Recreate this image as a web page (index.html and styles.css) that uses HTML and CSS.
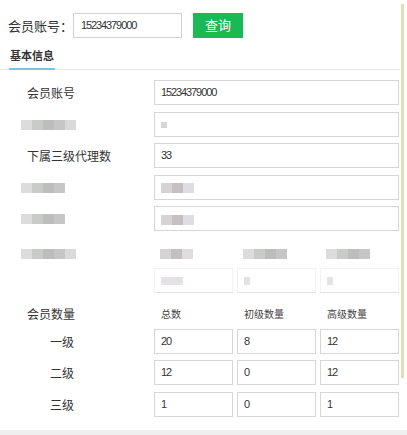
FILE: index.html
```html
<!DOCTYPE html>
<html lang="zh">
<head>
<meta charset="utf-8">
<link rel="stylesheet" href="styles.css">
</head>
<body>
<div class="page">
  <div class="search">
    <span class="search-label">会员账号：</span>
    <div class="search-input num">15234379000</div>
    <div class="btn">查询</div>
  </div>
  <div class="tabs">
    <div class="tab active">基本信息</div>
  </div>
  <div class="form">
    <div class="row">
      <div class="label">会员账号</div>
      <div class="field num">15234379000</div>
    </div>
    <div class="row">
      <div class="label"><span class="blur b5"><i></i><i></i><i></i><i></i><i></i></span></div>
      <div class="field"><span class="blur b1"><i></i></span></div>
    </div>
    <div class="row">
      <div class="label">下属三级代理数</div>
      <div class="field num">33</div>
    </div>
    <div class="row">
      <div class="label"><span class="blur b4"><i></i><i></i><i></i><i></i></span></div>
      <div class="field"><span class="blur b3"><i></i><i></i><i></i></span></div>
    </div>
    <div class="row">
      <div class="label"><span class="blur b4"><i></i><i></i><i></i><i></i></span></div>
      <div class="field"><span class="blur b3"><i></i><i></i><i></i></span></div>
    </div>
    <div class="row row-hidden">
      <div class="label"><span class="blur b5"><i></i><i></i><i></i><i></i><i></i></span></div>
      <div class="cols">
        <div class="col-head"><span class="blur b3"><i></i><i></i><i></i></span></div>
        <div class="col-head"><span class="blur b4"><i></i><i></i><i></i><i></i></span></div>
        <div class="col-head"><span class="blur b4"><i></i><i></i><i></i><i></i></span></div>
        <div class="field faint"><span class="blur b2 lite"><i></i><i></i></span></div>
        <div class="field faint"><span class="blur b1 lite"><i></i></span></div>
        <div class="field faint"><span class="blur b1 lite"><i></i></span></div>
      </div>
    </div>
    <div class="row head-row">
      <div class="label">会员数量</div>
      <div class="cols">
        <div class="col-title">总数</div>
        <div class="col-title">初级数量</div>
        <div class="col-title">高级数量</div>
      </div>
    </div>
    <div class="row">
      <div class="label sub">一级</div>
      <div class="cols">
        <div class="field num">20</div>
        <div class="field num">8</div>
        <div class="field num">12</div>
      </div>
    </div>
    <div class="row">
      <div class="label sub">二级</div>
      <div class="cols">
        <div class="field num">12</div>
        <div class="field num">0</div>
        <div class="field num">12</div>
      </div>
    </div>
    <div class="row">
      <div class="label sub">三级</div>
      <div class="cols">
        <div class="field num">1</div>
        <div class="field num">0</div>
        <div class="field num">1</div>
      </div>
    </div>
  </div>
  <div class="footer"></div>
  <div class="edge"></div>
</div>
</body>
</html>
```
FILE: styles.css
```css
* { box-sizing: border-box; }
html, body { margin: 0; padding: 0; background: #fff; }
body {
  font-family: "Liberation Sans", "Noto Sans CJK SC", sans-serif;
  color: #333;
}
.page {
  position: relative;
  width: 407px;
  height: 435px;
  overflow: hidden;
}
.search {
  display: flex;
  align-items: center;
  padding: 13px 0 0 8px;
  height: 38px;
}
.search-label {
  font-size: 13px;
  width: 65px;
  flex-shrink: 0;
  white-space: nowrap;
  color: #333;
}
.search-input {
  width: 109px;
  height: 25px;
  border: 1px solid #d2d2d2;
  line-height: 23px;
  padding-left: 7px;
  color: #333;
  flex-shrink: 0;
}
.num {
  font-size: 11px;
  letter-spacing: -1.1px;
}
.btn {
  margin-left: 11px;
  width: 50px;
  height: 25px;
  background: #19b955;
  color: #fff;
  font-size: 13px;
  line-height: 25px;
  text-align: center;
  flex-shrink: 0;
}
.tabs {
  display: flex;
  width: 400px;
  border-bottom: 1px solid #e6e6e6;
  padding-left: 9px;
}
.tab {
  font-size: 11px;
  font-weight: bold;
  line-height: 14px;
  padding: 11px 1px 5px 1px;
  border-bottom: 2px solid transparent;
  margin-bottom: -1px;
  color: #333;
}
.tab.active { border-bottom-color: #79c4e4; }
.form {
  display: flex;
  flex-direction: column;
  gap: 6.5px;
  padding-top: 10px;
}
.row {
  display: grid;
  grid-template-columns: 154px 245px;
  align-items: center;
}
.label {
  padding-left: 27px;
  font-size: 12px;
  color: #333;
}
.label.sub {
  padding-left: 50px;
}
.field {
  height: 25px;
  border: 1px solid #d6d6d6;
  line-height: 23px;
  padding-left: 6px;
  color: #333;
}
.cols {
  display: grid;
  grid-template-columns: 79px 79px 79px;
  column-gap: 4px;
}
.row-hidden { align-items: start; padding-top: 2px; }
.row-hidden .label { padding-top: 7px; }
.row-hidden .cols { row-gap: 4px; }
.col-head { height: 24px; padding-left: 6px; padding-top: 5px; }
.field.faint { border-color: #f2f2f2; border-bottom-color: #e2e2e2; }
.head-row { margin-top: 6px; }
.col-title {
  font-size: 10px;
  padding-left: 7px;
  color: #444;
}
.label .blur { margin-left: -6px; }
.blur {
  display: inline-flex;
  vertical-align: middle;
}
.blur i {
  display: block;
  width: 11px;
  height: 10px;
  background: #cfcfcf;
}
.blur i:nth-child(1) { background: #dcdcdc; }
.blur i:nth-child(2) { background: #c9cbc9; }
.blur i:nth-child(3) { background: #bdbdbd; }
.blur i:nth-child(4) { background: #c6c6c6; }
.blur i:nth-child(5) { background: #d9d9d9; }
.blur.b1 i { width: 6px; height: 6px; background: #d6d6d6; }
.blur.b3 i:nth-child(1) { background: #d4d4d4; }
.blur.b3 i:nth-child(2) { background: #c4c0c2; }
.blur.b3 i:nth-child(3) { background: #e0dde0; }
.blur.lite i { background: #e4e2e4; height: 8px; }
.footer {
  position: absolute;
  left: 0;
  right: 0;
  top: 430px;
  height: 5px;
  background: #efefef;
}
.edge {
  position: absolute;
  left: 401px;
  top: 4px;
  width: 3px;
  height: 374px;
  background: #e4dcb4;
}
```
